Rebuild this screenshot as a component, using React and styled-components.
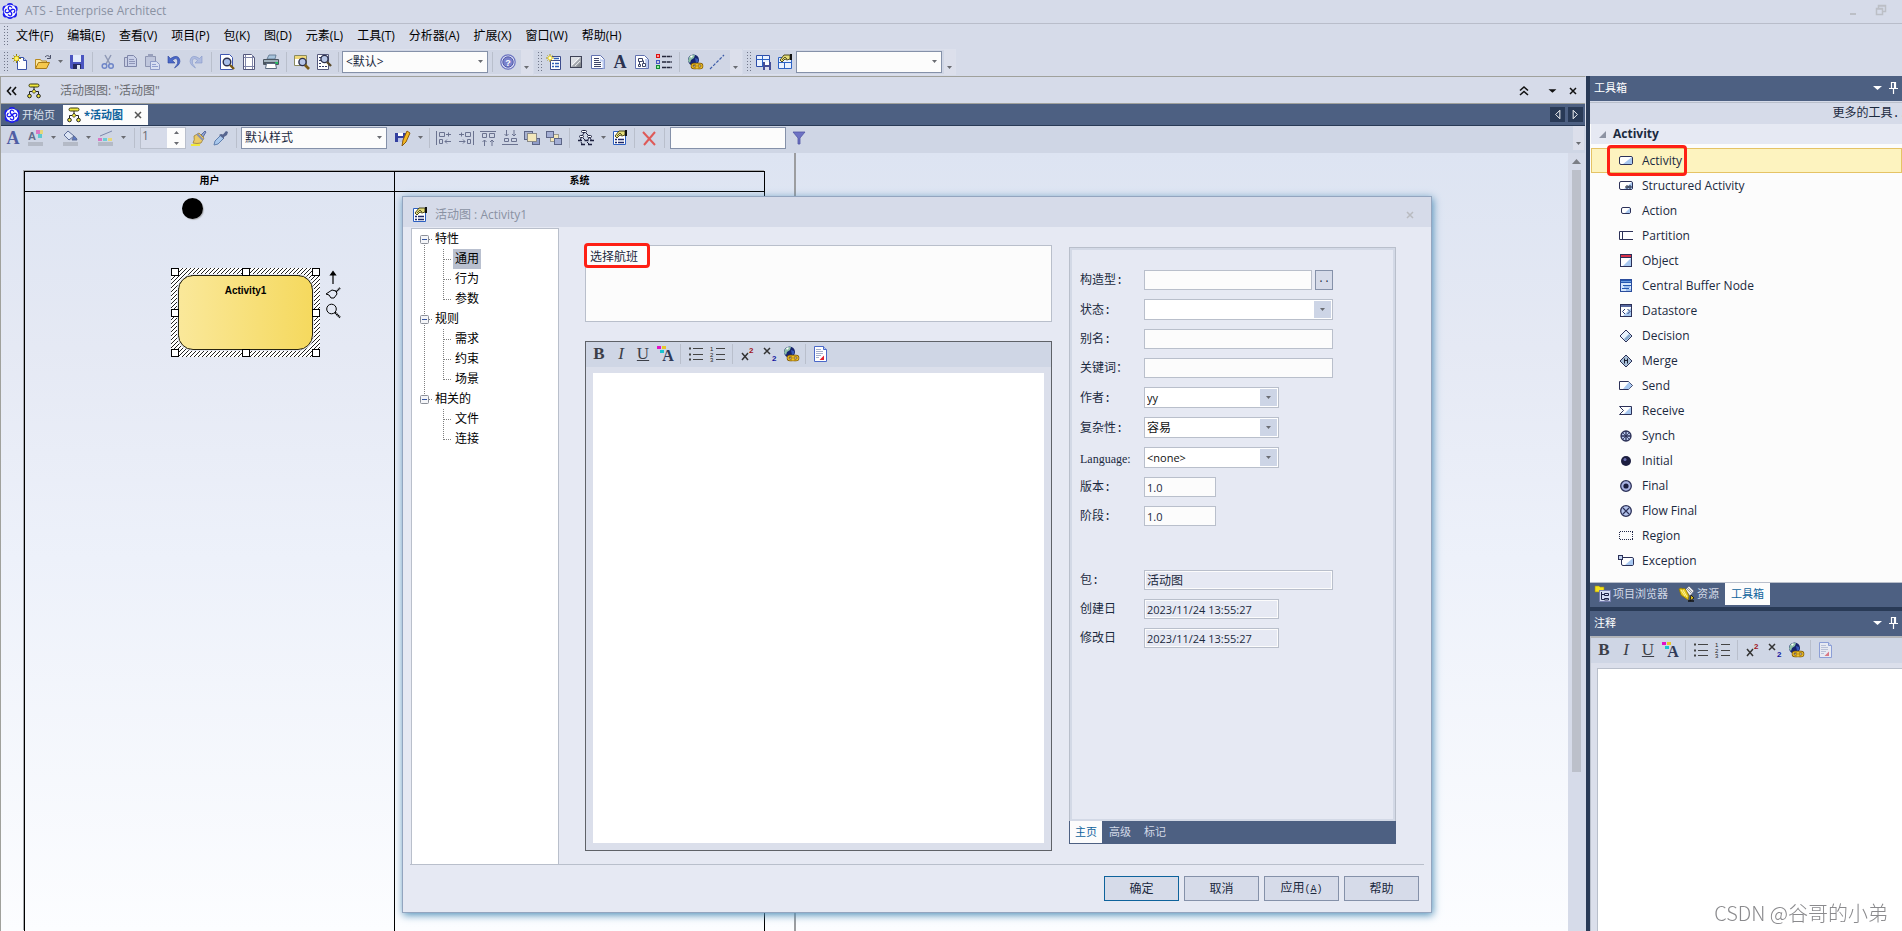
import React, {useState} from 'react';
import styled, {createGlobalStyle} from 'styled-components';

const uiFont = `"Open Sans", "Noto Sans CJK SC", sans-serif`;
const formFont = `"Liberation Mono", "Noto Sans CJK SC", monospace`;

const GlobalStyle = createGlobalStyle`
  * {
    box-sizing: border-box;
  }
  body {
    margin: 0;
    background: #d6dbe9;
    color: #1b293e;
    font: 12px/16px ${uiFont};
    overflow: hidden;
  }
  button, input, select, textarea {
    margin: 0;
    padding: 0;
    border: 0;
    border-radius: 0;
    background: none;
    color: inherit;
    font: inherit;
    outline: none;
  }
  svg {
    display: block;
    flex: none;
    overflow: visible;
  }
  ul {
    margin: 0;
    padding: 0;
    list-style: none;
  }
`;

/* ---------- icons ---------- */

const globe = (
  <>
    <circle cx="6.5" cy="6" r="5.5" fill="#16246e" />
    <path d="M2 3q3-3 6-2l-1 3-3 2-1 3-2-2z" fill="#8fc0a8" />
    <path d="M3 2q2-1 3 0l-2 2z" fill="#fff" />
    <path d="M8 4l3 1v3l-2 1z" fill="#3558b8" />
    <rect x="5" y="10" width="6" height="4" rx="2" fill="none" stroke="#7a5200" strokeWidth="2.6" />
    <rect x="9" y="10" width="6" height="4" rx="2" fill="none" stroke="#7a5200" strokeWidth="2.6" />
    <rect x="5" y="10" width="6" height="4" rx="2" fill="none" stroke="#f0c22c" strokeWidth="1.2" />
    <rect x="9" y="10" width="6" height="4" rx="2" fill="none" stroke="#f0c22c" strokeWidth="1.2" />
  </>
);

const hand = (
  <>
    <path d="M3 6l4-5h6v4l-3 1-2-1-3 3z" fill="#e4dc7a" stroke="#3c3a10" strokeWidth=".9" />
    <path d="M5 6l3-3 2 2" fill="none" stroke="#3c3a10" strokeWidth=".8" />
    <path d="M14 0v6" stroke="#111" strokeWidth="2" />
  </>
);

const ICONS = {
  logo: (
    <>
      <g fill="#1c1cf0">
        <circle cx="8" cy="3.4" r="3.4" />
        <circle cx="12.200" cy="6" r="3.4" />
        <circle cx="11.600" cy="11.200" r="3.4" />
        <circle cx="8" cy="12.800" r="3.2" />
        <circle cx="4.200" cy="11.200" r="3.4" />
        <circle cx="3.800" cy="6" r="3.4" />
      </g>
      <circle cx="8" cy="8" r="6.200" fill="#fff" />
      <path d="M8 8Q5.500 6 6.500 4T10 4.500M8 8q2-2.500 4-1.500T11.500 10M8 8q2.500 2 1.500 4T6 11.500M8 8q-2 2.500-4 1.500T4.500 6" fill="none" stroke="#1c1cf0" strokeWidth="1.300" />
    </>
  ),
  activityDiagram: (
    <>
      <rect x="3" y="1" width="10" height="3" rx="1.5" fill="#f2ea3c" stroke="#3a3a10" />
      <path d="M8 4v3M3.500 12V8.500h9V12" fill="none" stroke="#222" />
      <path d="M8 6l2 2.500-2 2-2-2z" fill="#f2ea3c" stroke="#222" strokeWidth=".8" />
      <circle cx="3.500" cy="13" r="1.800" fill="#f2ea3c" stroke="#222" />
      <circle cx="12.500" cy="13" r="1.800" fill="#f2ea3c" stroke="#222" />
    </>
  ),
  newFile: (
    <>
      <path d="M5.500 3.500h6l3 3v9h-9z" fill="#fff" stroke="#3d55a8" />
      <path d="M11.500 3.500v3h3" fill="#c5d4f4" stroke="#3d55a8" />
      <path d="M4.500 0v9M0 4.500h9M1.500 1.500l6 6M7.500 1.500l-6 6" stroke="#8a7a10" />
      <circle cx="4.500" cy="4.500" r="2.300" fill="#fff36a" stroke="#d8c41c" />
    </>
  ),
  open: (
    <>
      <path d="M.5 14V5.500h5l1 1.500h5v2" fill="#fbe7a0" stroke="#b88a20" />
      <path d="M.5 14.500l3-6h11l-3 6z" fill="#f6c84c" stroke="#a87a18" />
      <path d="M10 3q3-3 5 .5M15.500 1v3.500H12" fill="none" stroke="#4a5068" />
    </>
  ),
  save: (
    <>
      <path d="M1 1h14v14H2l-1-1z" fill="#4a55c0" />
      <rect x="4" y="1" width="8" height="7" fill="#e4ecfb" />
      <rect x="4" y="10" width="8" height="5" fill="#262b60" />
      <rect x="8" y="11" width="3" height="4" fill="#dfe6f4" />
    </>
  ),
  cut: (
    <>
      <path d="M5 1l5 9M11 1l-5 9" stroke="#8f99b5" strokeWidth="1.500" />
      <circle cx="4.500" cy="12" r="2.300" fill="none" stroke="#6f86c8" strokeWidth="1.500" />
      <circle cx="11" cy="12" r="2.300" fill="none" stroke="#6f86c8" strokeWidth="1.500" />
    </>
  ),
  copy: (
    <>
      <path d="M2.500 3.500h7v9h-7z" fill="#c9cfe4" stroke="#8288a8" />
      <path d="M5.500 1.500h6l3 3v8h-9z" fill="#c9d0e8" stroke="#7f87aa" />
      <path d="M7 5.500h5M7 7.500h6M7 9.500h6" stroke="#8f96b8" />
    </>
  ),
  paste: (
    <>
      <path d="M1.500 2.500h10v10h-10z" fill="#bfc6dc" stroke="#8d94b0" />
      <rect x="4" y="0" width="5" height="3" fill="#98a0bc" />
      <path d="M6.500 7.500h6l3 3v5h-9z" fill="#d9e0f2" stroke="#8f9cc8" />
      <path d="M8 10.500h4M8 12.500h6" stroke="#93a1cf" />
    </>
  ),
  undo: (
    <path d="M2 2v7h7L6.500 6.500Q10 3 11.500 6t-3 8q7-4 5-9T4.500 4.500z" fill="#4a68c8" stroke="#2c459c" strokeWidth=".6" />
  ),
  redo: (
    <path d="M14 2v7H7l2.500-2.500Q6 3 4.500 6t3 8q-7-4-5-9t9-.5z" fill="#aebbdf" stroke="#8798c9" strokeWidth=".6" />
  ),
  preview: (
    <>
      <path d="M1.500.5h9l3 3v12h-12z" fill="#fff" stroke="#3f57b0" />
      <circle cx="8" cy="8" r="3.800" fill="#a9bfe8" stroke="#2b2f4c" strokeWidth="1.400" />
      <path d="M11 11l4 4" stroke="#7a5a14" strokeWidth="2.400" />
    </>
  ),
  pageSetup: (
    <>
      <path d="M2.500.5h8l3 3v12h-11z" fill="#fff" stroke="#54587c" />
      <path d="M4.500 1v14M11.500 1v14M3 3.500h10M3 12.500h10" stroke="#8085a8" />
    </>
  ),
  print: (
    <>
      <path d="M4 5l2-4h7l-1 4z" fill="#a8c4dc" stroke="#587088" strokeWidth=".8" />
      <rect x="0" y="5" width="16" height="6" rx="1" fill="#4b5560" />
      <rect x="1" y="6" width="14" height="2" fill="#9fb0bb" />
      <rect x="12" y="8" width="3" height="2" fill="#22c060" />
      <path d="M3.500 9.500h9l1 5h-11z" fill="#fff" stroke="#5a6a80" />
    </>
  ),
  findProject: (
    <>
      <path d="M.5 1.500h12v10H.5z" fill="#fff" stroke="#8a8a60" />
      <path d="M1 2h11v3H1z" fill="#f0d878" />
      <circle cx="8.500" cy="8" r="3.600" fill="#b7c6e6" stroke="#2b2f4c" strokeWidth="1.400" />
      <path d="M11 11l4 4" stroke="#7a5a14" strokeWidth="2.600" />
    </>
  ),
  findModel: (
    <>
      <path d="M1.500.5h11v15h-11z" fill="#fff" stroke="#55597c" />
      <path d="M3 3.500h2M3 6.500h2M3 9.500h2M3 12.500h8" stroke="#333a66" strokeDasharray="2 1" />
      <circle cx="8.500" cy="5" r="3.600" fill="#b7c6e6" stroke="#2b2f4c" strokeWidth="1.400" />
      <path d="M11 8l4 4" stroke="#5a4a2a" strokeWidth="2.400" />
    </>
  ),
  help: (
    <>
      <circle cx="8" cy="8" r="7.200" fill="#dfe3f6" stroke="#6a72c0" strokeWidth="1.200" />
      <circle cx="8" cy="8" r="5.200" fill="#7a82cc" stroke="#5058a8" />
      <text x="8" y="11.500" textAnchor="middle" fontFamily="Liberation Sans" fontWeight="700" fontSize="9" fill="#fff">?</text>
    </>
  ),
  newElement: (
    <>
      <path d="M4.500 2.500h10v4h-10zM4.500 6.500h10v9h-10z" fill="#fff" stroke="#3c4c8c" />
      <path d="M8 4.500h5M6 9.500h2M9 9.500h4M6 12.500h2M9 12.500h4" stroke="#2f5fb8" strokeWidth="1.500" />
      <path d="M4 0v8M0 4h8M1.500 1.500l5 5M6.500 1.500l-5 5" stroke="#a8941c" />
      <circle cx="4" cy="4" r="2" fill="#fffbd0" stroke="#ecd93a" />
    </>
  ),
  gradientBox: (
    <>
      <rect x="2.500" y="2.500" width="11" height="11" fill="#dcdfe4" stroke="#3e4256" />
      <path d="M13 3v10H3z" fill="#a4a8ae" />
      <path d="M13 8v5H8z" fill="#85898f" />
      <path d="M4 11l7-7M7 12l5-5" stroke="#fff" strokeWidth=".7" />
    </>
  ),
  note: (
    <>
      <path d="M1.500 1.500h9l4 4v9h-13z" fill="#fff" stroke="#6272b0" />
      <path d="M10.500 1.500v4h4v9h-2v-7h-3z" fill="#bccbf0" />
      <path d="M4 4.500h5M4 6.500h5M4 8.500h7M4 10.500h7M4 12.500h7" stroke="#3c4468" />
    </>
  ),
  bigA: (
    <text x="8" y="14" textAnchor="middle" fontFamily="Liberation Serif" fontWeight="700" fontSize="18" fill="#2b3350">A</text>
  ),
  blueA: (
    <text x="8" y="14" textAnchor="middle" fontFamily="Liberation Serif" fontWeight="700" fontSize="18" fill="#4f5ea4">A</text>
  ),
  diagramDoc: (
    <>
      <path d="M1.500 1.500h9l4 4v9h-13z" fill="#fff" stroke="#6272b0" />
      <path d="M11 5h3v9h-2z" fill="#bccbf0" />
      <path d="M4.500 4.500h4v3h-4zM8.500 9.500h3v3h-3zM4.500 10.500h2v2h-2zM9.500 6.500v3M5.500 8v2" fill="none" stroke="#3c4468" />
    </>
  ),
  legend: (
    <>
      <rect x=".5" y=".5" width="3" height="3" fill="#f99" stroke="#d11" />
      <rect x=".5" y="6.500" width="3" height="3" fill="#ccd" stroke="#4455c0" />
      <rect x=".5" y="11.500" width="3" height="3" fill="#9e9" stroke="#183" />
      <path d="M6 2.500h10M6 8h10M6 13.500h10" stroke="#23263a" strokeWidth="1.500" strokeDasharray="4 .6" />
    </>
  ),
  globe,
  dashLine: <path d="M1 15L15 1" stroke="#3c5ca8" strokeWidth="1.200" strokeDasharray="3 1.500" />,
  layoutSave: (
    <>
      <path d="M1.500 1.500h13v11h-13z" fill="#eaf2ff" stroke="#2c4ca8" />
      <path d="M7.500 1.500v11M1.500 5.500h13" stroke="#2c62c4" />
      <rect x="8" y="8" width="8" height="8" fill="#454e98" />
      <rect x="10" y="8" width="4" height="3" fill="#fff" />
      <rect x="10" y="13" width="4" height="3" fill="#dde" />
    </>
  ),
  layoutHand: (
    <>
      <path d="M1.500 3.500h13v11h-13z" fill="#eaf2ff" stroke="#2c62c4" />
      <path d="M7.500 8v6M1.500 8.500h13" stroke="#2c62c4" />
      {hand}
    </>
  ),
  properties: (
    <>
      <path d="M1.500 1.500h12v13h-12z" fill="#fff" stroke="#2c5fc0" />
      <path d="M3 9.500h2M6 9.500h6M3 12.500h2M6 12.500h6" stroke="#1b2668" strokeWidth="1.500" />
      {hand}
    </>
  ),
  fontColor: (
    <>
      <text x="4" y="10" textAnchor="middle" fontFamily="Liberation Sans" fontWeight="700" fontSize="11" fill="#5f6c8c">A</text>
      <rect x="8" y="0" width="4" height="4" fill="#d878c4" />
      <rect x="12" y="0" width="3" height="4" fill="#e6d77c" />
      <rect x="10" y="4" width="4" height="4" fill="#5fc8ce" />
      <rect x="0" y="12" width="15" height="4" fill="#b4bac6" />
    </>
  ),
  fillColor: (
    <>
      <path d="M5 1l6 5-5 4-5-5z" fill="#dbe4f4" stroke="#5d6c98" />
      <path d="M11 6q3 2 3 4H9z" fill="#5b78c4" stroke="#5d6c98" />
      <rect x="0" y="12" width="15" height="4" fill="#b4bac6" />
    </>
  ),
  lineColor: (
    <>
      <path d="M2 6l12-5" stroke="#7d89ac" />
      <rect x="0" y="8" width="4" height="3" fill="#d878c4" />
      <rect x="5" y="8" width="4" height="3" fill="#6fcbd4" />
      <rect x="10" y="8" width="4" height="3" fill="#e6d77c" />
      <rect x="0" y="12" width="15" height="4" fill="#b4bac6" />
    </>
  ),
  brush: (
    <>
      <path d="M10 5l4-4 1 1-3 5z" fill="#8fa3d0" stroke="#5b6ca0" />
      <path d="M3 6l5-3 5 5-3 5q-4 1-8 0 2-3 1-7z" fill="#eacb66" stroke="#a08030" strokeWidth=".8" />
      <path d="M6 4l6 6" stroke="#8a92b0" strokeWidth="2" />
      <path d="M0 15h9" stroke="#f0e83c" strokeWidth="2" />
    </>
  ),
  dropper: (
    <>
      <path d="M1 15l1-4 6-6 3 3-6 6z" fill="#a9c8ec" stroke="#5f7fae" />
      <path d="M8 4l2 .5L13 1l2 1-1 3-3 2 0 2-5-4z" fill="#56658f" />
    </>
  ),
  savePencil: (
    <>
      <path d="M0 3h11v9H0z" fill="#3340a0" />
      <rect x="3" y="3" width="5" height="3" fill="#fff" />
      <rect x="3" y="8" width="5" height="4" fill="#b9c3e8" />
      <path d="M12 1l3 2-4 9-4 4 1-6z" fill="#f4b820" stroke="#8a5a10" />
    </>
  ),
  alignLeft: (
    <>
      <path d="M.5 1v14" stroke="#6b7390" />
      <path d="M3.500 2.500h5v4h-5zM3.500 9.500h3v4h-3z" fill="none" stroke="#6b7390" />
      <path d="M10 4.500h5M12.500 2.500v4M9 11.500h6M11 9.500l-2 2 2 2" fill="none" stroke="#6b7390" />
    </>
  ),
  alignRight: (
    <>
      <path d="M15.500 1v14" stroke="#6b7390" />
      <path d="M7.500 2.500h5v4h-5zM9.500 9.500h3v4h-3z" fill="none" stroke="#6b7390" />
      <path d="M1 4.500h5M3.500 2.500v4M1 11.500h6M5 9.500l2 2-2 2" fill="none" stroke="#6b7390" />
    </>
  ),
  alignTop: (
    <>
      <path d="M0 1.500h16" stroke="#6b7390" />
      <path d="M2.500 3.500h4v4h-4zM9.500 3.500h5v4h-5z" fill="none" stroke="#6b7390" />
      <path d="M4.500 16v-6M2.500 12l2-2 2 2M12 16v-6M10 12l2-2 2 2" fill="none" stroke="#6b7390" />
    </>
  ),
  alignBottom: (
    <>
      <path d="M0 14.500h16" stroke="#6b7390" />
      <path d="M2.500 8.500h4v3h-4zM9.500 8.500h5v3h-5z" fill="none" stroke="#6b7390" />
      <path d="M4.500 0v6M2.500 4l2 2 2-2M12 0v6M10 4l2 2 2-2" fill="none" stroke="#6b7390" />
    </>
  ),
  bringFront: (
    <>
      <rect x=".5" y="1.500" width="8" height="8" fill="#a8b2cf" stroke="#5c6586" />
      <rect x="8.500" y="8.500" width="7" height="6" fill="#8f9cc8" stroke="#5c6586" />
      <rect x="3.500" y="3.500" width="9" height="8" fill="#f3e8bb" stroke="#8a8a88" />
    </>
  ),
  sendBack: (
    <>
      <rect x="4.500" y="4.500" width="8" height="7" fill="#f3e8bb" stroke="#9a9a90" />
      <rect x=".5" y="1.500" width="7" height="6" fill="#a3aed4" stroke="#5c6586" />
      <rect x="8.500" y="8.500" width="7" height="6" fill="#a3aed4" stroke="#5c6586" />
    </>
  ),
  layoutTree: (
    <>
      <path d="M6 3L4 6M8 3l3 3M3 8l-1 3M5 8l3 3M11 8l-2 3M12 8l2 3M3 12l1 2M9 12l2 2" fill="none" stroke="#1e2240" />
      <rect x="3.500" y=".5" width="5" height="2" rx="1" fill="#fff" stroke="#1e2240" />
      <rect x="1.500" y="5.500" width="4" height="2" rx="1" fill="#fff" stroke="#1e2240" />
      <rect x="9.500" y="5.500" width="4" height="2" rx="1" fill="#fff" stroke="#1e2240" />
      <path d="M0 10.500h4M6.500 10.500h4M12 10.500h4M3 14.500h4M10 14.500h4" stroke="#1e2240" strokeWidth="1.500" />
    </>
  ),
  remove: <path d="M2 2l12 13M14 2L3 15" stroke="#de5a58" strokeWidth="2" />,
  filter: <path d="M2 2h12L9 8v6H7V8z" fill="#6d72c4" stroke="#5157a4" strokeWidth=".8" />,
  styleA: (
    <>
      <text x="11" y="15" textAnchor="middle" fontFamily="Liberation Serif" fontWeight="700" fontSize="16" fill="#2f3a58">A</text>
      <rect x="0" y="0" width="4" height="3" fill="#e210c8" />
      <rect x="5" y="0" width="4" height="3" fill="#e8c62a" />
      <rect x="3" y="4" width="4" height="3" fill="#18c4d0" />
    </>
  ),
  bullets: (
    <>
      <path d="M1 2.500h2M1 8.500h2M1 13.500h2" stroke="#444" strokeWidth="2" />
      <path d="M5 2.500h10M5 8.500h10M5 13.500h10" stroke="#444" />
    </>
  ),
  numbers: (
    <>
      <path d="M6 2.500h9M6 8.500h9M6 13.500h9" stroke="#444" />
      <text x="0" y="5" fontFamily="Liberation Sans" fontSize="6" fill="#222">1</text>
      <text x="0" y="11" fontFamily="Liberation Sans" fontSize="6" fill="#222">2</text>
      <text x="0" y="16" fontFamily="Liberation Sans" fontSize="6" fill="#222">3</text>
    </>
  ),
  superscript: (
    <>
      <path d="M3 7l6 7M9 7l-6 7" stroke="#333" strokeWidth="1.500" />
      <text x="10" y="7" fontFamily="Liberation Sans" fontWeight="700" fontSize="8" fill="#a01020">2</text>
    </>
  ),
  subscript: (
    <>
      <path d="M3 2l6 6M9 2L3 8" stroke="#333" strokeWidth="1.500" />
      <text x="11" y="15" fontFamily="Liberation Sans" fontWeight="700" fontSize="8" fill="#1414a0">2</text>
    </>
  ),
  report: (
    <>
      <path d="M2.500.5h9l3 3v12h-12z" fill="#fff" stroke="#4a68c8" />
      <path d="M11.500.5v3h3" fill="#bccbf0" stroke="#4a68c8" />
      <path d="M4 3.500h5M4 5.500h7M4 7.500h7M4 9.500h5M4 11.500h3" stroke="#a4aecb" />
      <path d="M12 9.500v4.500H7.500z" fill="#e4202c" />
    </>
  ),
  activity: (
    <>
      <rect x="1.500" y="3.500" width="13" height="8" rx="1.500" fill="#fff" stroke="#2c3158" />
      <path d="M14 4v7H5z" fill="#a8c8f0" />
    </>
  ),
  structured: (
    <>
      <rect x="1.500" y="3.500" width="13" height="8" rx="1.500" fill="#fff" stroke="#2c3158" />
      <path d="M14 4v7H6z" fill="#a8c8f0" />
      <circle cx="9" cy="9" r="1.200" fill="none" stroke="#1a1d30" />
      <circle cx="12" cy="9" r="1.200" fill="none" stroke="#1a1d30" />
    </>
  ),
  action: (
    <>
      <rect x="3.500" y="4.500" width="9" height="6" rx="1.500" fill="#fff" stroke="#2c3158" />
      <path d="M12 5v5H7z" fill="#a8c8f0" />
    </>
  ),
  partition: <path d="M15 3.500H1.500v8H15M4.500 3.500v8" fill="#fff" stroke="#2c3158" />,
  object: (
    <>
      <rect x="2.500" y="1.500" width="11" height="12" fill="#fff" stroke="#2c3158" />
      <path d="M13 5v8H5z" fill="#a8c8f0" />
      <path d="M3 3h10" stroke="#d83048" strokeWidth="2" />
      <path d="M3 4.500h10" stroke="#2c3158" />
    </>
  ),
  buffer: (
    <>
      <rect x="2.500" y="1.500" width="11" height="12" fill="#d4e6fc" stroke="#2a4c9c" />
      <path d="M3 2.500h10M3 4.500h10M5 7.500h8M4 10.500h7" stroke="#2458b0" />
      <path d="M3 3.500h10M6 9h6M8 12h5" stroke="#6a9ce0" />
    </>
  ),
  datastore: (
    <>
      <rect x="2.500" y="1.500" width="11" height="12" fill="#fff" stroke="#2c3158" />
      <path d="M13 5v8H5z" fill="#a8c8f0" />
      <path d="M3 3h10" stroke="#5868a0" strokeWidth="2" />
      <path d="M7 6L4.500 8.500 7 11M9.500 6L12 8.500 9.500 11" fill="none" stroke="#2a3a70" />
    </>
  ),
  decision: (
    <>
      <path d="M8 2l6 6-6 6-6-6z" fill="#e8f2fc" stroke="#2c3158" />
      <path d="M13 8l-5 5-2-2 5-5z" fill="#86a8cc" />
    </>
  ),
  merge: (
    <>
      <path d="M8 2l6 6-6 6-6-6z" fill="#a8c0d8" stroke="#2c3158" />
      <path d="M6.500 10.500v-5M9.500 10.500v-5M6.500 7.500h3" stroke="#1a1d30" />
    </>
  ),
  send: (
    <>
      <path d="M1.500 3.500h9l4 4-4 4h-9z" fill="#fff" stroke="#2c3158" />
      <path d="M11 4l3 3.500-3 3.500H5z" fill="#a8c8f0" />
    </>
  ),
  receive: (
    <>
      <path d="M1.500 3.500h12v8h-12l4-4z" fill="#fff" stroke="#2c3158" />
      <path d="M13 4v7H6z" fill="#a8c8f0" />
    </>
  ),
  synch: (
    <>
      <circle cx="8" cy="8" r="5" fill="#b8c8ec" stroke="#2c3158" strokeWidth="1.300" />
      <path d="M8 3v10M3 8h10" stroke="#2c3158" strokeWidth="1.300" />
      <path d="M5 5l6 6M11 5l-6 6" stroke="#2c3158" strokeWidth=".8" />
    </>
  ),
  initial: (
    <>
      <circle cx="8" cy="8" r="5" fill="#1c1e40" />
      <circle cx="7" cy="6.500" r="1.500" fill="#6a6eb0" />
    </>
  ),
  final: (
    <>
      <circle cx="8" cy="8" r="5.300" fill="#aab4e4" stroke="#2c3158" strokeWidth="1.300" />
      <circle cx="8" cy="8" r="2.600" fill="#1c1e40" />
    </>
  ),
  flowFinal: (
    <>
      <circle cx="8" cy="8" r="5.300" fill="#b4c4ec" stroke="#2c3158" strokeWidth="1.300" />
      <path d="M5 5l6 6M11 5l-6 6" stroke="#2c3158" strokeWidth="1.200" />
    </>
  ),
  region: <path d="M2 3.500h13M2 11.500h13M1.500 4v8M14.500 4v8" fill="none" stroke="#222848" strokeDasharray="1 1" />,
  exception: (
    <>
      <rect x="3.500" y="4.500" width="12" height="8" rx="1.500" fill="#fff" stroke="#2c3158" />
      <path d="M15 5v7H7z" fill="#a8c8f0" />
      <rect x=".5" y="2.500" width="4" height="4" fill="#c4d4f0" stroke="#2c3158" />
    </>
  ),
  browser: (
    <>
      <path d="M0 0h4l1 1h4v5H0z" fill="#f4e21c" stroke="#a08c10" strokeWidth=".6" />
      <rect x="4.500" y="4.500" width="11" height="11" fill="#d4dcf4" stroke="#7880b0" />
      <path d="M6.500 6v7.500h3M6.500 8.500h3M9.500 7.500h4v2h-4zM9.500 12.500h4v1.500h-4z" fill="none" stroke="#1c2348" />
    </>
  ),
  resources: (
    <>
      <path d="M6 4l4-4 5 5-4 5z" fill="#e8eaf0" stroke="#666c80" strokeWidth=".8" />
      <path d="M8 3l4 4M9 2l4 4" stroke="#777" strokeWidth=".7" />
      <path d="M0 3l2-1 2 1 1-1 2 2 3 6-1 4-7-5z" fill="#e6c81c" stroke="#8a7408" strokeWidth=".8" />
      <path d="M4 4l4 7M2 4l4 6" stroke="#fff3a0" />
      <path d="M12 9l3 3-4 3z" fill="#e6c81c" stroke="#222" />
      <path d="M9 15h6" stroke="#111" strokeWidth="1.500" />
    </>
  ),
  quickArrow: <path d="M8 15V4M5.500 6L8 2.500 10.500 6z" stroke="#000" strokeWidth="1.200" fill="#000" />,
  quickBrush: (
    <>
      <path d="M1 8l6-4 4 1 1 3-3 4H6L4 9z" fill="none" stroke="#000" />
      <path d="M11 6l4-4" stroke="#000" strokeWidth="2" strokeDasharray="1 .6" />
    </>
  ),
  quickZoom: (
    <>
      <circle cx="6.500" cy="6" r="4.800" fill="none" stroke="#000" />
      <path d="M10 9.500l5 5" stroke="#000" strokeWidth="2" strokeDasharray="1.500 .5" />
    </>
  ),
  restore: <path d="M4.500 5V2.500h7v6H9M2.500 5.500h6v6h-6zM4 3h8M2 6h7" fill="none" stroke="#bcbfc6" strokeWidth="1.500" />,
  minimise: <path d="M4 11h6" stroke="#bcbfc6" strokeWidth="2" />,
  pin: <path d="M5.500 2.500h4v6h-4zM3 8.500h9M7.500 9v5M8.500 3v5" fill="none" stroke="#fff" strokeWidth="1.200" />,
  close: <path d="M5 5l6 6M11 5l-6 6" stroke="currentColor" strokeWidth="1.500" />,
  chevronsLeft: <path d="M7 4L3.500 8 7 12M12 4L8.500 8l3.500 4" fill="none" stroke="#111" strokeWidth="1.600" />,
  chevronsUp: <path d="M4 7.500L8 4l4 3.500M4 12l4-3.500 4 3.500" fill="none" stroke="#111" strokeWidth="1.600" />,
  triDown: <path d="M4 6h9l-4.500 4z" fill="currentColor" />,
  triLeft: <path d="M10.500 3.500v9L6 8z" fill="none" stroke="#fff" />,
  triRight: <path d="M5.500 3.500v9L10 8z" fill="none" stroke="#fff" />,
};

const Icon = ({name, size = 16}) => (
  <svg width={size} height={size} viewBox="0 0 16 16" aria-hidden="true">
    {ICONS[name]}
  </svg>
);

const Caret = () => (
  <svg width="7" height="4" viewBox="0 0 7 4" aria-hidden="true">
    <path d="M1 0h5L3.500 3z" fill="#6a6c72" />
  </svg>
);

/* ---------- shared toolbar parts ---------- */

const ToolButton = styled.button`
  display: flex;
  flex: none;
  align-items: center;
  justify-content: center;
  width: 22px;
  height: 22px;
  &:disabled {
    opacity: 0.5;
  }
`;

const CaretButton = styled(ToolButton)`
  width: 12px;
`;

const Split = styled.div`
  display: flex;
  flex: none;
  padding-left: 1px;
`;

const Separator = styled.span`
  flex: none;
  width: 1px;
  height: 20px;
  margin: 0 ${({$gap = 4}) => $gap}px;
  background: #b9bfcc;
`;

const Grip = styled.span`
  flex: none;
  width: 5px;
  height: 22px;
  margin: 0 1px 0 3px;
  background-image: radial-gradient(#71778a 1px, transparent 1px);
  background-size: 3px 3px;
`;

const Overflow = styled.button`
  display: flex;
  flex: none;
  align-items: flex-end;
  justify-content: center;
  width: 11px;
  height: 24px;
  margin-left: 2px;
  padding-bottom: 4px;
  background: #dcdfeb;
`;

const SelectBox = styled.span`
  display: grid;
  flex: none;
  align-items: center;
  width: ${({$width}) => $width}px;
  margin-right: ${({$after = 0}) => $after}px;
  > * {
    grid-area: 1 / 1;
  }
  > svg {
    justify-self: end;
    margin-right: 4px;
    pointer-events: none;
  }
`;

const FlatSelect = styled.select`
  appearance: none;
  width: 100%;
  height: 22px;
  padding-left: 3px;
  border: 1px solid #8591a9;
  background: #fcfcfc;
`;

const ToolSelect = ({label, value, width = 146, after}) => (
  <SelectBox $width={width} $after={after}>
    <FlatSelect aria-label={label} defaultValue={value}>
      <option>{value}</option>
    </FlatSelect>
    <Caret />
  </SelectBox>
);

const Tool = ({name, disabled}) => (
  <ToolButton type="button" aria-label={name} disabled={disabled}>
    <Icon name={name} />
  </ToolButton>
);

const SplitTool = ({name}) => (
  <Split>
    <Tool name={name} />
    <CaretButton type="button" aria-label={`${name} options`}>
      <Caret />
    </CaretButton>
  </Split>
);

/* ---------- window frame ---------- */

const Window = styled.div`
  display: flex;
  flex-direction: column;
  height: 100vh;
`;

const TitleBar = styled.header`
  display: flex;
  align-items: center;
  flex: none;
  height: 24px;
  padding: 0 12px 2px 2px;
  border-bottom: 1px solid #b9bdca;
  color: #8a92a3;
  h1 {
    flex: 1;
    margin: 0 0 0 7px;
    font-size: 12px;
    font-weight: 400;
  }
`;

const WindowButtons = styled.div`
  display: flex;
  gap: 12px;
`;

const MenuBar = styled.nav`
  display: flex;
  align-items: center;
  flex: none;
  height: 24px;
`;

const MenuItem = styled.button`
  height: 22px;
  padding: 0 7px;
  color: #000;
  white-space: nowrap;
`;

const ToolStrip = styled.div`
  display: flex;
  align-items: center;
  flex: none;
  gap: 1px;
  height: 28px;
  padding-bottom: 1px;
`;

const ToolGroup = styled.div`
  display: flex;
  align-items: center;
  height: 26px;
  border: 1px solid #dce0ec;
  border-left: 0;
  background: #d0d6e5;
`;

const Workspace = styled.main`
  display: flex;
  flex: 1;
  min-height: 0;
`;

const MENUS = ['文件(F)', '编辑(E)', '查看(V)', '项目(P)', '包(K)', '图(D)', '元素(L)', '工具(T)', '分析器(A)', '扩展(X)', '窗口(W)', '帮助(H)'];

const MainToolbar = () => (
  <ToolStrip>
    <ToolGroup>
      <Grip />
      <Tool name="newFile" />
      <SplitTool name="open" />
      <Tool name="save" />
      <Separator />
      <Tool name="cut" />
      <Tool name="copy" />
      <Tool name="paste" />
      <Tool name="undo" />
      <Tool name="redo" />
      <Separator />
      <Tool name="preview" />
      <Tool name="pageSetup" />
      <Tool name="print" />
      <Separator />
      <Tool name="findProject" />
      <Tool name="findModel" />
      <Separator $gap={3} />
      <ToolSelect label="默认" value="<默认>" />
      <Separator />
      <Tool name="help" />
      <Overflow type="button" aria-label="更多">
        <Caret />
      </Overflow>
    </ToolGroup>
    <ToolGroup>
      <Grip />
      <Tool name="newElement" />
      <Tool name="gradientBox" />
      <Tool name="note" />
      <Tool name="bigA" />
      <Tool name="diagramDoc" />
      <Tool name="legend" />
      <Separator />
      <Tool name="globe" />
      <Tool name="dashLine" />
      <Overflow type="button" aria-label="更多">
        <Caret />
      </Overflow>
    </ToolGroup>
    <ToolGroup>
      <Grip />
      <Tool name="layoutSave" />
      <Tool name="layoutHand" />
      <ToolSelect label="布局" value="" />
      <Overflow type="button" aria-label="更多">
        <Caret />
      </Overflow>
    </ToolGroup>
  </ToolStrip>
);

/* ---------- diagram pane ---------- */

const DiagramPane = styled.section`
  display: flex;
  flex: 1;
  flex-direction: column;
  min-width: 0;
  border: 1px solid #a0a19c;
  border-bottom: 0;
  border-right-color: #d6dbe9;
`;

const Caption = styled.div`
  display: flex;
  align-items: center;
  flex: none;
  height: 27px;
  padding: 1px 2px 0 1px;
  border-bottom: 1px solid #a0a19c;
  color: #6b6d72;
  span {
    flex: 1;
    margin-left: 16px;
  }
`;

const CaptionButton = styled(ToolButton)`
  width: 20px;
  margin-left: ${({$gap = 0}) => $gap}px;
  color: #111;
`;

const DocTabs = styled.div`
  display: flex;
  align-items: flex-end;
  flex: none;
  height: 22px;
  padding-right: 2px;
  border-bottom: 1px solid #293a56;
  background: #4d6082;
`;

const DocTab = styled.button`
  display: flex;
  align-items: center;
  gap: 2px;
  height: 20px;
  padding: 0 ${({$active}) => ($active ? 2 : 8)}px 0 3px;
  background: ${({$active}) => ($active ? '#fcfcfc' : 'transparent')};
  color: ${({$active}) => ($active ? '#0e639c' : '#dbe1ec')};
  font-weight: ${({$active}) => ($active ? 700 : 400)};
  font-size: 11px;
`;

const CloseGlyph = styled.span`
  margin-left: 5px;
  color: #555;
`;

const TabScroll = styled.div`
  display: flex;
  gap: 3px;
  margin: 0 0 3px auto;
  button {
    width: 15px;
    height: 15px;
    background: #293a56;
  }
`;

const DiagramTools = styled.div`
  display: flex;
  align-items: center;
  flex: none;
  height: 27px;
  padding: 0 1px 3px;
  background: #cfd6e5;
`;

const SpinBox = styled.span`
  display: flex;
  flex: none;
  width: 46px;
  height: 22px;
  margin-right: 2px;
  border: 1px solid #b9bfcc;
  background: #fcfcfc;
  color: #6a6c72;
  input {
    width: 26px;
    padding: 0 0 5px 1px;
    background: #d6dbe9;
  }
  svg {
    margin: auto;
  }
`;

const FilterInput = styled.input`
  flex: none;
  width: 116px;
  height: 22px;
  margin: 0 2px 0 1px;
  border: 1px solid #8591a9;
  background: #fcfcfc;
`;

const Spacer = styled.span`
  flex: 1;
`;

const CanvasRow = styled.div`
  display: flex;
  flex: 1;
  min-height: 0;
`;

const Canvas = styled.div`
  position: relative;
  flex: 1;
  background: linear-gradient(#dde4f2, #e5e9f4 25%, #edf1fa 52%, #fcfdff);
  overflow: hidden;
`;

const ScrollTrack = styled.div`
  display: flex;
  flex: none;
  flex-direction: column;
  align-items: center;
  gap: 6px;
  width: 17px;
  padding-top: 6px;
  background: #d6dbe9;
`;

const ScrollThumb = styled.div`
  width: 9px;
  height: 78%;
  background: #bcc0ca;
`;

const PageEdge = styled.div`
  position: absolute;
  top: 0;
  bottom: 0;
  left: 793px;
  width: 2px;
  background: #9c9da0;
`;

const Swimlanes = styled.div`
  position: absolute;
  top: 18px;
  bottom: 0;
  left: 23px;
  display: flex;
  width: 741px;
  border: 1px solid #000;
  border-bottom: 0;
  box-shadow: -1px -1px 0 #a9abaf;
`;

const Lane = styled.div`
  flex: 1;
  &:first-child {
    flex: none;
    width: 369px;
  }
  & + & {
    border-left: 1px solid #000;
  }
  h2 {
    height: 20px;
    margin: 0;
    border-bottom: 1px solid #000;
    color: #000;
    font: 700 10px/18px "Liberation Sans", "Noto Sans CJK SC", sans-serif;
    text-align: center;
  }
`;

const InitialNode = styled.div`
  position: absolute;
  top: 45px;
  left: 181px;
  width: 21px;
  height: 21px;
  border-radius: 50%;
  background: #000;
  box-shadow: 1px 1px 1px #b0b2b6;
`;

const ActivityNode = styled.div`
  position: absolute;
  top: 115px;
  left: 170px;
  width: 149px;
  height: 89px;
  padding: 7px;
`;

const Hatch = styled.svg`
  position: absolute;
  inset: 0;
  width: 100%;
  height: 100%;
`;

const ActivityShape = styled.div`
  position: relative;
  height: 100%;
  padding-top: 7px;
  border: 1px solid #2a2610;
  border-radius: 15px;
  background: linear-gradient(90deg, #fae89a, #f5d95e);
  box-shadow: 0 0 0 1px #e3e7f2;
  color: #000;
  font: 700 10px/15px "Liberation Sans", sans-serif;
  text-align: center;
`;

const Handle = styled.i`
  position: absolute;
  top: ${({$row}) => ['0', 'calc(50% - 4px)', 'calc(100% - 8px)'][$row]};
  left: ${({$col}) => ['0', 'calc(50% - 4px)', 'calc(100% - 8px)'][$col]};
  width: 8px;
  height: 8px;
  border: 1px solid #000;
  background: #fff;
`;

const QuickLinks = styled.div`
  position: absolute;
  top: 116px;
  left: 324px;
  display: flex;
  flex-direction: column;
  gap: 1px;
`;

const HANDLES = [[0, 0], [0, 1], [0, 2], [1, 0], [1, 2], [2, 0], [2, 1], [2, 2]];

const DiagramToolbar = () => (
  <DiagramTools>
    <Tool name="blueA" />
    <SplitTool name="fontColor" />
    <SplitTool name="fillColor" />
    <SplitTool name="lineColor" />
    <Separator $gap={5} />
    <SpinBox>
      <input aria-label="线宽" defaultValue="1" />
      <svg width="7" height="16" viewBox="0 0 7 16" aria-hidden="true">
        <path d="M1 4h5L3.500 1zM1 12h5l-2.500 3z" fill="#6a6c72" />
      </svg>
    </SpinBox>
    <Tool name="brush" />
    <Tool name="dropper" />
    <Separator />
    <ToolSelect label="样式" value="默认样式" after={4} />
    <SplitTool name="savePencil" />
    <Separator $gap={3} />
    <Tool name="alignLeft" />
    <Tool name="alignRight" />
    <Tool name="alignTop" />
    <Tool name="alignBottom" />
    <Tool name="bringFront" />
    <Tool name="sendBack" />
    <Separator />
    <SplitTool name="layoutTree" />
    <Tool name="properties" />
    <Separator $gap={3} />
    <Tool name="remove" />
    <Separator />
    <FilterInput aria-label="过滤" />
    <Tool name="filter" />
    <Spacer />
    <Overflow type="button" aria-label="更多">
      <Caret />
    </Overflow>
  </DiagramTools>
);

const SelectionHatch = () => (
  <Hatch aria-hidden="true">
    <defs>
      <pattern id="hatch" width="4" height="4" patternUnits="userSpaceOnUse" shapeRendering="crispEdges">
        <rect width="4" height="4" fill="#fff" />
        <path d="M3 0h1v1h-1zM2 1h1v1h-1zM1 2h1v1h-1zM0 3h1v1h-1z" fill="#222" />
      </pattern>
    </defs>
    <rect width="100%" height="100%" fill="url(#hatch)" />
  </Hatch>
);

const Diagram = ({children}) => (
  <DiagramPane>
    <Caption>
      <CaptionButton type="button" aria-label="折叠">
        <Icon name="chevronsLeft" />
      </CaptionButton>
      <CaptionButton type="button" aria-label="图" $gap={2}>
        <Icon name="activityDiagram" />
      </CaptionButton>
      <span>活动图图: "活动图"</span>
      <CaptionButton type="button" aria-label="收起">
        <Icon name="chevronsUp" />
      </CaptionButton>
      <CaptionButton type="button" aria-label="菜单" $gap={8}>
        <Icon name="triDown" size={14} />
      </CaptionButton>
      <CaptionButton type="button" aria-label="关闭" $gap={1}>
        <Icon name="close" />
      </CaptionButton>
    </Caption>
    <DocTabs>
      <DocTab type="button">
        <Icon name="logo" />
        开始页
      </DocTab>
      <DocTab type="button" $active>
        <Icon name="activityDiagram" />
        *活动图
        <CloseGlyph>
          <Icon name="close" />
        </CloseGlyph>
      </DocTab>
      <TabScroll>
        <button type="button" aria-label="上一个">
          <Icon name="triLeft" size={15} />
        </button>
        <button type="button" aria-label="下一个">
          <Icon name="triRight" size={15} />
        </button>
      </TabScroll>
    </DocTabs>
    <DiagramToolbar />
    <CanvasRow>
      <Canvas>
        <PageEdge />
        <Swimlanes>
          <Lane>
            <h2>用户</h2>
          </Lane>
          <Lane>
            <h2>系统</h2>
          </Lane>
        </Swimlanes>
        <InitialNode />
        <ActivityNode>
          <SelectionHatch />
          <ActivityShape>Activity1</ActivityShape>
          {HANDLES.map(([row, col]) => (
            <Handle key={`${row}${col}`} $row={row} $col={col} />
          ))}
        </ActivityNode>
        <QuickLinks>
          <Icon name="quickArrow" />
          <Icon name="quickBrush" />
          <Icon name="quickZoom" />
        </QuickLinks>
        {children}
      </Canvas>
      <ScrollTrack>
        <svg width="9" height="5" viewBox="0 0 9 5" aria-hidden="true">
          <path d="M0 5h9L4.500 0z" fill="#7b7e85" />
        </svg>
        <ScrollThumb />
      </ScrollTrack>
    </CanvasRow>
  </DiagramPane>
);

/* ---------- rich text toolbar ---------- */

const RichBar = styled.div`
  display: flex;
  align-items: center;
  flex: none;
  height: 25px;
  padding: 0 2px 1px;
  background: #cfd6e5;
`;

const LetterButton = styled(ToolButton)`
  color: #3c3f48;
  font: 17px/20px "Liberation Serif", serif;
  font-weight: ${({$bold}) => ($bold ? 700 : 400)};
  font-style: ${({$italic}) => ($italic ? 'italic' : 'normal')};
  text-decoration: ${({$underline}) => ($underline ? 'underline' : 'none')};
`;

const RichTextBar = ({reportDisabled}) => (
  <RichBar>
    <LetterButton type="button" $bold>B</LetterButton>
    <LetterButton type="button" $italic>I</LetterButton>
    <LetterButton type="button" $underline>U</LetterButton>
    <Tool name="styleA" />
    <Separator />
    <Tool name="bullets" />
    <Tool name="numbers" />
    <Separator $gap={3} />
    <Tool name="superscript" />
    <Tool name="subscript" />
    <Tool name="globe" />
    <Separator $gap={3} />
    <Tool name="report" disabled={reportDisabled} />
  </RichBar>
);

/* ---------- properties dialog ---------- */

const DialogFrame = styled.section`
  position: absolute;
  top: 43px;
  left: 401px;
  display: flex;
  flex-direction: column;
  width: 1030px;
  height: 717px;
  border: 1px solid #93a5bf;
  background: #e6e9f3;
  box-shadow: 1px 2px 8px #4f8fb8;
`;

const DialogTitle = styled.div`
  display: flex;
  align-items: center;
  flex: none;
  gap: 7px;
  height: 30px;
  padding: 6px 13px 0 9px;
  background: #d6dbe9;
  color: #8a92a3;
  h2 {
    flex: 1;
    margin: 0;
    font-size: 12px;
    font-weight: 400;
  }
  button {
    color: #b9bbc0;
  }
`;

const DialogBody = styled.div`
  display: flex;
  flex: 1;
  min-height: 0;
  padding: 1px 35px 0 8px;
`;

const Tree = styled.ul`
  flex: none;
  width: 148px;
  margin-right: 26px;
  padding-left: 3px;
  border: 1px solid #b9bfcb;
  border-bottom: 0;
  background: #fff;
  color: #000;
`;

const TreeRow = styled.div`
  display: flex;
  height: 20px;
`;

const TreeLabel = styled.button`
  padding: 0 2px;
  background: ${({$selected}) => ($selected ? '#b9c0cf' : 'transparent')};
`;

const MiddleColumn = styled.div`
  display: flex;
  flex: 1;
  flex-direction: column;
  gap: 19px;
  padding: 17px 0 13px;
`;

const NameBox = styled.div`
  position: relative;
  display: flex;
  flex: none;
  height: 77px;
  textarea {
    flex: 1;
    padding: 3px 4px;
    border: 1px solid #b9bfcb;
    background: #fcfcfc;
    resize: none;
  }
`;

const RedMark = styled.span`
  position: absolute;
  top: ${({$top}) => $top}px;
  left: ${({$left}) => $left}px;
  width: ${({$width}) => $width}px;
  height: ${({$height}) => $height}px;
  border: 3px solid #fe2015;
  border-radius: 4px;
  pointer-events: none;
`;

const NotesBox = styled.div`
  display: flex;
  flex: 1;
  flex-direction: column;
  border: 1px solid #5f6268;
  background: #dbdfeb;
  textarea {
    flex: 1;
    margin: 6px 7px 7px;
    background: #fff;
    resize: none;
  }
`;

const FormColumn = styled.div`
  display: flex;
  flex: none;
  flex-direction: column;
  width: 327px;
  margin-left: 17px;
  padding: 19px 0 20px;
`;

const Form = styled.form`
  flex: 1;
  padding: 20px 9px;
  border: 1px solid #b9bfcb;
  border-bottom: 0;
  box-shadow: inset 0 0 0 2px #d3d9e6;
`;

const FieldSet = styled.div`
  display: flex;
  flex-direction: column;
  gap: 9px;
  margin: 2px 1px 44px;
`;

const Field = styled.div`
  display: flex;
  align-items: center;
  label {
    flex: none;
    width: 64px;
    padding-top: 2px;
    font: 12px/18px ${({$latin}) => ($latin ? '"Liberation Serif", serif' : formFont)};
    white-space: nowrap;
  }
`;

const TextBox = styled.input`
  width: ${({$width}) => $width}px;
  height: 20px;
  padding: 0 2px;
  border: 1px solid #b9bfcb;
  background: ${({readOnly}) => (readOnly ? '#e6e9f3' : '#fcfcfc')};
  box-shadow: ${({readOnly}) => (readOnly ? 'inset 0 0 0 1px #fcfcfc' : 'none')};
  font-size: ${({$size = 11}) => $size}px;
`;

const BrowseButton = styled.button`
  width: 18px;
  height: 20px;
  margin-left: 3px;
  border: 1px solid #8591a9;
  background: #d6dbe9;
  font: 10px/18px ${formFont};
`;

const FormSelect = styled(FlatSelect)`
  height: 21px;
  padding-left: 2px;
  border-color: #b9bfcb;
  background: #fff;
  color: #111;
  font-size: ${({$size = 11}) => $size}px;
`;

const DropCap = styled.span`
  display: flex;
  align-items: center;
  justify-content: center;
  justify-self: end;
  width: 17px;
  height: 17px;
  margin-right: 2px;
  background: #cdd5e6;
  pointer-events: none;
`;

const FormTabs = styled.div`
  display: flex;
  flex: none;
  height: 23px;
  background: #4d6082;
  color: #d3dae8;
`;

const FormTab = styled.button`
  height: 22px;
  margin-left: 1px;
  padding: 0 6px;
  background: ${({$active}) => ($active ? '#fcfcfc' : 'transparent')};
  color: ${({$active}) => ($active ? '#0e639c' : 'inherit')};
  font-size: 11px;
  &:first-child {
    padding: 0 5px;
  }
`;

const Footer = styled.div`
  display: flex;
  flex: none;
  justify-content: flex-end;
  gap: 5px;
  height: 48px;
  margin: 0 7px;
  padding: 11px 5px 11px 0;
  border-top: 1px solid #b9bfcb;
`;

const PushButton = styled.button`
  width: 75px;
  height: 25px;
  padding-top: 2px;
  border: 1px solid ${({$primary}) => ($primary ? '#0e639c' : '#8591a9')};
  background: #d6dbe9;
  font: 12px/20px ${formFont};
  small {
    font-size: 10px;
  }
`;

const TREE = [
  {name: '特性', children: ['通用', '行为', '参数']},
  {name: '规则', children: ['需求', '约束', '场景']},
  {name: '相关的', children: ['文件', '连接']},
];

const dots = {stroke: '#808080', strokeDasharray: '1 1'};

const RootGuide = ({first, last}) => (
  <svg width="18" height="20" viewBox="0 0 18 20" aria-hidden="true">
    <path d={`M9.500 ${first ? 10 : 0}V${last ? 10 : 20}M10 10.500h8`} {...dots} />
    <rect x="5.500" y="6.500" width="8" height="8" rx="1" fill="#f4f5f8" stroke="#8c9099" />
    <path d="M7 10.500h5" stroke="#3455a0" />
  </svg>
);

const LeafGuide = ({end, rootLine}) => (
  <svg width="38" height="20" viewBox="0 0 38 20" aria-hidden="true">
    <path d={`${rootLine ? 'M9.500 0V20' : ''}M28.500 0V${end ? 11 : 20}M29 10.500h8`} {...dots} />
  </svg>
);

const PropertyTree = () => {
  const [selected, setSelected] = useState('通用');
  return (
    <Tree>
      {TREE.map(({name, children}, idx) => (
        <li key={name}>
          <TreeRow>
            <RootGuide first={idx === 0} last={idx === TREE.length - 1} />
            <TreeLabel type="button">{name}</TreeLabel>
          </TreeRow>
          {children.map((child, i) => (
            <TreeRow key={child}>
              <LeafGuide end={i === children.length - 1} rootLine={idx < TREE.length - 1} />
              <TreeLabel type="button" $selected={selected === child} onClick={() => setSelected(child)}>
                {child}
              </TreeLabel>
            </TreeRow>
          ))}
        </li>
      ))}
    </Tree>
  );
};

const TextField = ({id, label, width, value, readOnly, size, children}) => (
  <Field>
    <label htmlFor={id}>{label}</label>
    <TextBox id={id} $width={width} $size={size} defaultValue={value} readOnly={readOnly} />
    {children}
  </Field>
);

const SelectField = ({id, label, width, value, latin, size}) => (
  <Field $latin={latin}>
    <label htmlFor={id}>{label}</label>
    <SelectBox $width={width}>
      <FormSelect id={id} defaultValue={value} $size={size}>
        <option>{value}</option>
      </FormSelect>
      <DropCap>
        <Caret />
      </DropCap>
    </SelectBox>
  </Field>
);

const PropertiesDialog = () => (
  <DialogFrame role="dialog" aria-label="活动图 : Activity1">
    <DialogTitle>
      <Icon name="properties" />
      <h2>活动图 : Activity1</h2>
      <button type="button" aria-label="关闭">
        <Icon name="close" />
      </button>
    </DialogTitle>
    <DialogBody>
      <PropertyTree />
      <MiddleColumn>
        <NameBox>
          <textarea aria-label="名称" defaultValue="选择航班" />
          <RedMark $top={-2} $left={-1} $width={66} $height={25} />
        </NameBox>
        <NotesBox>
          <RichTextBar />
          <textarea aria-label="注释" />
        </NotesBox>
      </MiddleColumn>
      <FormColumn>
        <Form>
          <FieldSet>
            <TextField id="stereotype" label="构造型:" width={168}>
              <BrowseButton type="button">..</BrowseButton>
            </TextField>
            <SelectField id="status" label="状态:" width={189} value="" />
            <TextField id="alias" label="别名:" width={189} />
            <TextField id="keywords" label="关键词：" width={189} />
            <SelectField id="author" label="作者:" width={135} value="yy" />
            <SelectField id="complexity" label="复杂性:" width={135} value="容易" size={12} />
            <SelectField id="language" label="Language:" width={135} value="<none>" latin />
            <TextField id="version" label="版本:" width={72} value="1.0" />
            <TextField id="phase" label="阶段:" width={72} value="1.0" />
          </FieldSet>
          <FieldSet>
            <TextField id="package" label="包:" width={189} value="活动图" size={12} readOnly />
            <TextField id="created" label="创建日" width={135} value="2023/11/24 13:55:27" readOnly />
            <TextField id="modified" label="修改日" width={135} value="2023/11/24 13:55:27" readOnly />
          </FieldSet>
        </Form>
        <FormTabs>
          <FormTab type="button" $active>主页</FormTab>
          <FormTab type="button">高级</FormTab>
          <FormTab type="button">标记</FormTab>
        </FormTabs>
      </FormColumn>
    </DialogBody>
    <Footer>
      <PushButton type="button" $primary>确定</PushButton>
      <PushButton type="button">取消</PushButton>
      <PushButton type="button">
        应用<small>(<u>A</u>)</small>
      </PushButton>
      <PushButton type="button">帮助</PushButton>
    </Footer>
  </DialogFrame>
);

/* ---------- right dock ---------- */

const Dock = styled.aside`
  display: flex;
  flex: none;
  flex-direction: column;
  width: 316px;
  border-left: 4px solid #293a56;
`;

const PanelTitle = styled.div`
  display: flex;
  align-items: center;
  flex: none;
  height: 25px;
  padding: 0 0 1px 4px;
  background: #4d6082;
  color: #fff;
  h2 {
    flex: 1;
    margin: 0;
    font-size: 11px;
    font-weight: 400;
  }
`;

const PanelButton = styled.button`
  margin-left: 1px;
`;

const MoreTools = styled.div`
  display: flex;
  flex: none;
  justify-content: flex-end;
  height: 22px;
  margin-top: 1px;
  padding-top: 1px;
  border-top: 1px solid #b9bfcb;
  overflow: hidden;
  button {
    margin-right: -12px;
    font-family: ${formFont};
  }
`;

const ToolList = styled.div`
  flex: none;
  position: relative;
  height: 459px;
  padding-left: 1px;
  border-bottom: 1px solid #b9bfcb;
  background: #fcfcfc;
`;

const Category = styled.button`
  display: flex;
  align-items: center;
  gap: 7px;
  width: 100%;
  height: 20px;
  margin-bottom: 4px;
  padding-left: 8px;
  background: #e6e9f3;
  font-weight: 700;
`;

const ToolItem = styled.button`
  display: flex;
  align-items: center;
  gap: 8px;
  width: 100%;
  height: 25px;
  padding-left: 26px;
  border: 1px solid ${({$selected}) => ($selected ? '#e5c365' : 'transparent')};
  background: ${({$selected}) => ($selected ? '#fdf3bf' : 'transparent')};
  color: #1b293e;
`;

const DockTabs = styled.div`
  display: flex;
  flex: none;
  height: 28px;
  border-bottom: 4px solid #293a56;
  background: #4d6082;
`;

const DockTab = styled.button`
  display: flex;
  align-items: center;
  gap: 2px;
  height: 22px;
  padding: 0 6px 0 ${({$active}) => ($active ? 6 : 5)}px;
  background: ${({$active}) => ($active ? '#fcfcfc' : 'transparent')};
  color: ${({$active}) => ($active ? '#0e639c' : '#d3dae8')};
  font-size: 11px;
`;

const NotesPanel = styled.div`
  display: flex;
  flex: 1;
  flex-direction: column;
  border-top: 2px solid #b3b5b8;
  border-left: 1px solid #b9bfcb;
  background: #dbdfeb;
  textarea {
    flex: 1;
    margin: 5px 0 0 6px;
    border: 1px solid #b9bfcb;
    border-width: 1px 0 0 1px;
    background: #fff;
    resize: none;
  }
`;

const Watermark = styled.div`
  position: fixed;
  right: 14px;
  bottom: 5px;
  color: #8a8a8d;
  font: 300 20px/26px "Noto Sans CJK SC", sans-serif;
`;

const TOOLS = [
  ['activity', 'Activity'],
  ['structured', 'Structured Activity'],
  ['action', 'Action'],
  ['partition', 'Partition'],
  ['object', 'Object'],
  ['buffer', 'Central Buffer Node'],
  ['datastore', 'Datastore'],
  ['decision', 'Decision'],
  ['merge', 'Merge'],
  ['send', 'Send'],
  ['receive', 'Receive'],
  ['synch', 'Synch'],
  ['initial', 'Initial'],
  ['final', 'Final'],
  ['flowFinal', 'Flow Final'],
  ['region', 'Region'],
  ['exception', 'Exception'],
];

const PanelHeader = ({title}) => (
  <PanelTitle>
    <h2>{title}</h2>
    <PanelButton type="button" aria-label="菜单">
      <Icon name="triDown" />
    </PanelButton>
    <PanelButton type="button" aria-label="固定">
      <Icon name="pin" />
    </PanelButton>
  </PanelTitle>
);

const RightDock = () => {
  const [tool, setTool] = useState('activity');
  return (
    <Dock>
      <PanelHeader title="工具箱" />
      <MoreTools>
        <button type="button">更多的工具...</button>
      </MoreTools>
      <ToolList>
        <Category type="button">
          <svg width="7" height="7" viewBox="0 0 7 7" aria-hidden="true">
            <path d="M7 0v7H0z" fill="#8d93a3" />
          </svg>
          Activity
        </Category>
        {TOOLS.map(([icon, label]) => (
          <ToolItem key={icon} type="button" $selected={tool === icon} onClick={() => setTool(icon)}>
            <Icon name={icon} />
            {label}
          </ToolItem>
        ))}
        <RedMark $top={21} $left={17} $width={80} $height={31} />
      </ToolList>
      <DockTabs>
        <DockTab type="button">
          <Icon name="browser" />
          项目浏览器
        </DockTab>
        <DockTab type="button">
          <Icon name="resources" />
          资源
        </DockTab>
        <DockTab type="button" $active>工具箱</DockTab>
      </DockTabs>
      <PanelHeader title="注释" />
      <NotesPanel>
        <RichTextBar reportDisabled />
        <textarea aria-label="注释内容" />
      </NotesPanel>
    </Dock>
  );
};

const App = () => (
  <Window>
    <GlobalStyle />
    <TitleBar>
      <Icon name="logo" />
      <h1>ATS - Enterprise Architect</h1>
      <WindowButtons>
        <button type="button" aria-label="最小化">
          <Icon name="minimise" />
        </button>
        <button type="button" aria-label="还原">
          <Icon name="restore" />
        </button>
      </WindowButtons>
    </TitleBar>
    <MenuBar>
      <Grip />
      {MENUS.map((item) => (
        <MenuItem key={item} type="button">
          {item}
        </MenuItem>
      ))}
    </MenuBar>
    <MainToolbar />
    <Workspace>
      <Diagram>
        <PropertiesDialog />
      </Diagram>
      <RightDock />
    </Workspace>
    <Watermark>CSDN @谷哥的小弟</Watermark>
  </Window>
);

export default App;
